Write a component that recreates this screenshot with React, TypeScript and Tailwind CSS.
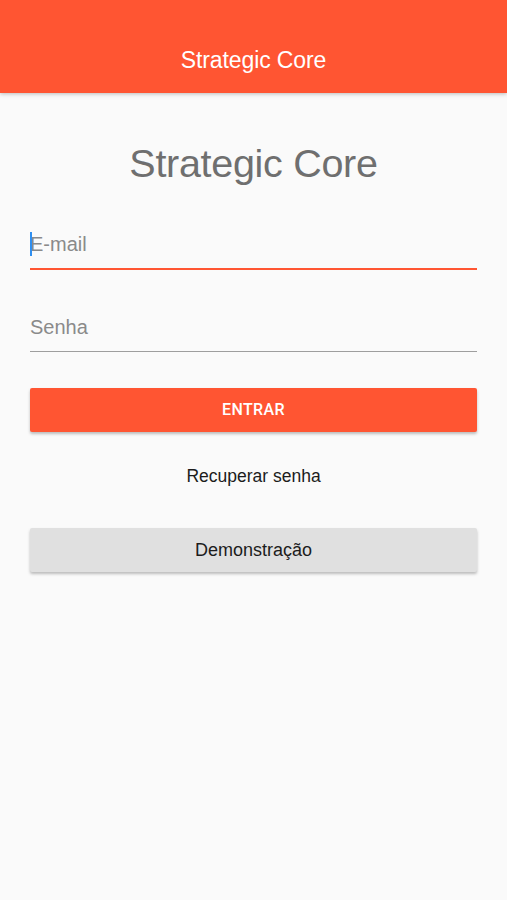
export default function App() {
  return (
    <div className="min-h-[900px] bg-[#fafafa] font-['Liberation_Sans',Arial,sans-serif]">
      <header className="h-[93px] bg-[#ff5532] flex items-end justify-center pb-[21px] shadow-[0_1px_4px_rgba(0,0,0,0.25)] relative">
        <h1 className="text-white text-[23px] leading-none tracking-[-0.1px]">Strategic Core</h1>
      </header>

      <div className="px-[30px]">
        <h2 className="text-center text-[#6f6f6f] text-[39.5px] leading-[39px] mt-[51px] tracking-[-0.3px]">Strategic Core</h2>

        <div className="mt-[37px]">
          <div className="relative h-[50px] border-b-2 border-[#ff5532] flex items-center">
            <span className="absolute left-0 top-[12px] w-[2px] h-[24px] bg-[#2f8ff0]" />
            <input
              placeholder="E-mail"
              className="w-full bg-transparent outline-none text-[20px] text-[#333] placeholder:text-[#8a8a8a]"
            />
          </div>
        </div>

        <div className="mt-[32px]">
          <div className="h-[50px] border-b border-[#9e9e9e] flex items-center">
            <input
              type="password"
              placeholder="Senha"
              className="w-full bg-transparent outline-none text-[20px] text-[#333] placeholder:text-[#8a8a8a]"
            />
          </div>
        </div>

        <button className="mt-[36px] w-full h-[44px] rounded-[2px] bg-[#ff5532] text-white text-[16px] font-['Roboto',sans-serif] font-medium tracking-[0.4px] shadow-[0_2px_3px_rgba(0,0,0,0.25)]">
          ENTRAR
        </button>

        <button className="mt-[34px] w-full text-center text-[17.5px] leading-[20px] text-[#1c1c1c]">
          Recuperar senha
        </button>

        <button className="mt-[39px] w-full h-[44px] rounded-[2px] bg-[#e0e0e0] text-[#1c1c1c] text-[18px] shadow-[0_2px_3px_rgba(0,0,0,0.25)]">
          Demonstração
        </button>
      </div>
    </div>
  );
}
